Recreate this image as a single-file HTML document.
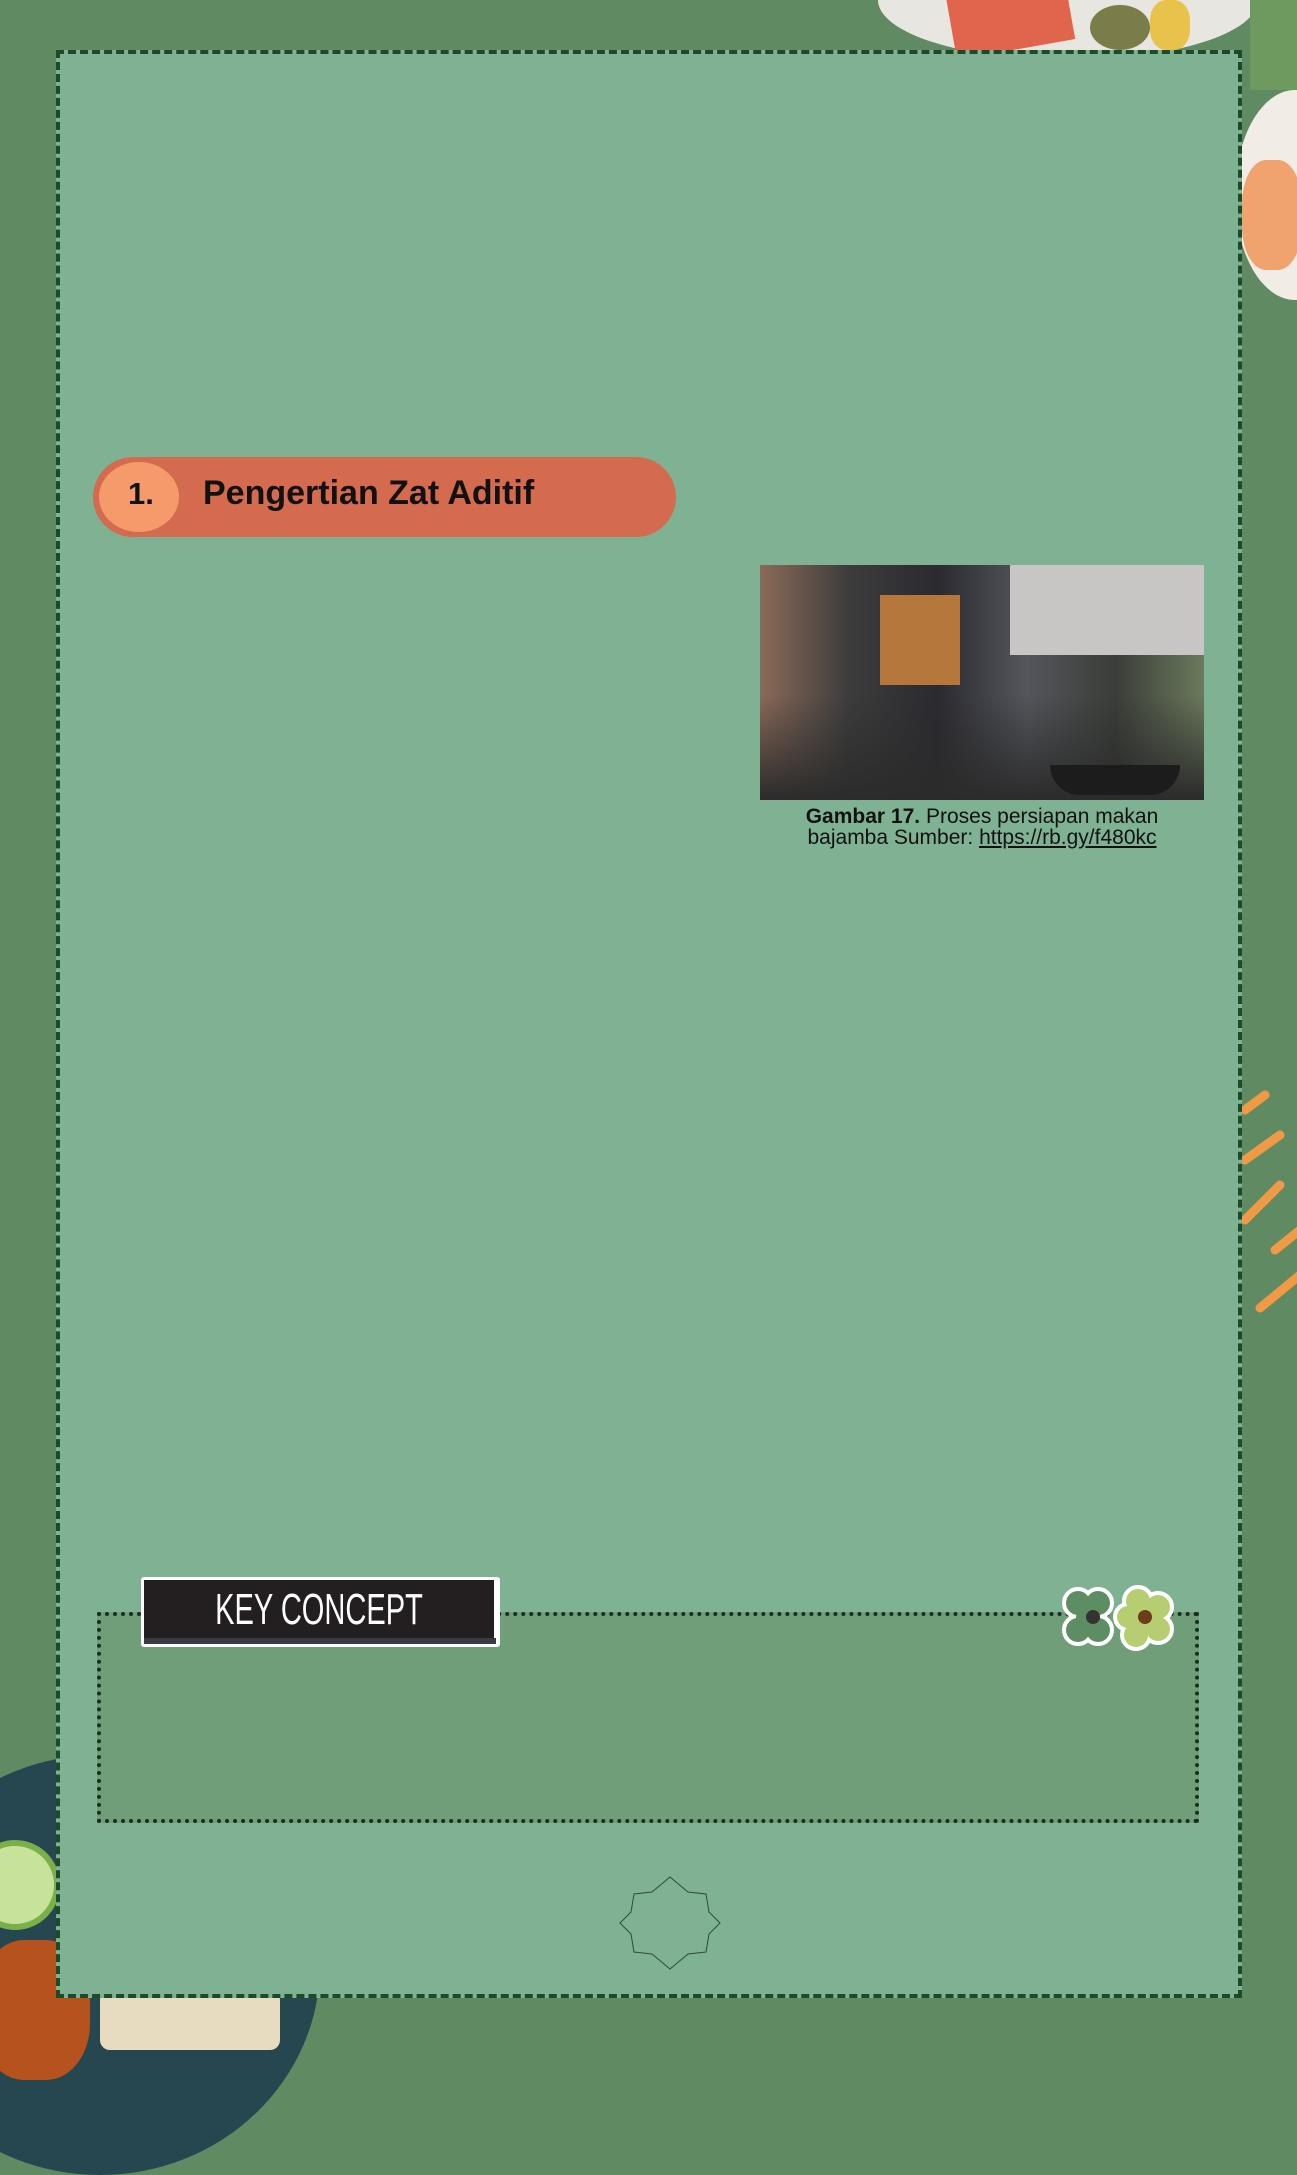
<!DOCTYPE html>
<html><head><meta charset="utf-8"><style>
*{margin:0;padding:0;box-sizing:border-box}
body{width:1297px;height:2047px;background:#5f8a62;position:relative;overflow:hidden;font-family:"Liberation Sans",sans-serif}
.a{position:absolute}
</style></head><body>
<!-- top right food plate -->
<div class="a" style="left:878px;top:-60px;width:380px;height:120px;border-radius:50%;background:#e8e6e0"></div>
<div class="a" style="left:950px;top:-20px;width:120px;height:70px;background:#e0654c;transform:rotate(-10deg)"></div>
<div class="a" style="left:1090px;top:5px;width:60px;height:45px;border-radius:50%;background:#7a7d4a"></div>
<div class="a" style="left:1150px;top:0px;width:40px;height:50px;border-radius:40%;background:#e8c24a"></div>
<div class="a" style="left:1235px;top:90px;width:120px;height:210px;border-radius:50%;background:#f1ede6"></div>
<div class="a" style="left:1242px;top:160px;width:60px;height:110px;border-radius:40%;background:#f0a36e"></div>
<div class="a" style="left:1250px;top:0;width:47px;height:90px;background:#6e9a60"></div>
<!-- bottom-left bowl -->
<div class="a" style="left:-120px;top:1755px;width:440px;height:420px;border-radius:50%;background:#264650"></div>
<div class="a" style="left:-30px;top:1840px;width:90px;height:90px;border-radius:50%;background:#c7e39a;border:6px solid #79b04a"></div>
<div class="a" style="left:-20px;top:1940px;width:110px;height:140px;border-radius:40%;background:#b6521e"></div>
<div class="a" style="left:100px;top:1990px;width:180px;height:60px;background:#e8dcc0;border-radius:10px"></div>
<!-- orange stripes -->
<svg class="a" style="left:1240px;top:1080px" width="57" height="240"><g stroke="#f09a45" stroke-width="9" stroke-linecap="round"><line x1="5" y1="30" x2="25" y2="15"/><line x1="5" y1="80" x2="40" y2="55"/><line x1="5" y1="140" x2="40" y2="105"/><line x1="35" y1="170" x2="60" y2="150"/><line x1="20" y1="228" x2="60" y2="195"/></g></svg>
<!-- main frame -->
<div class="a" style="left:56px;top:50px;width:1186px;height:1948px;background:#7fb293;border:4px dashed #1f4a2a"></div>
<!-- pill -->
<div class="a" style="left:93px;top:457px;width:583px;height:80px;border-radius:40px;background:#d46a4e"></div>
<div class="a" style="left:99px;top:462px;width:80px;height:70px;border-radius:50%;background:#f59a6a"></div>
<div class="a" style="left:128px;top:476px;font-size:31px;font-weight:bold;color:#111">1.</div>
<div class="a" style="left:203px;top:474px;font-size:34px;font-weight:bold;color:#111">Pengertian Zat Aditif</div>
<!-- photo -->
<div class="a" style="left:760px;top:565px;width:444px;height:235px;overflow:hidden;background:linear-gradient(90deg,#8b6a58 0%,#3d3c3c 20%,#2a2a30 40%,#54565c 60%,#3a3d38 80%,#6b7a5c 100%)">
<div class="a" style="left:250px;top:0;width:194px;height:90px;background:#c8c6c4"></div>
<div class="a" style="left:120px;top:30px;width:80px;height:90px;background:#b5783a"></div>
<div class="a" style="left:0;top:130px;width:444px;height:105px;background:linear-gradient(180deg,rgba(40,40,40,0) 0%,#2b2b2b 100%)"></div>
<div class="a" style="left:290px;top:200px;width:130px;height:30px;border-radius:0 0 60px 60px;background:#1c1c1c"></div>
</div>
<div class="a" style="left:740px;top:806px;width:484px;text-align:center;font-size:21px;line-height:21px;color:#111"><b>Gambar 17.</b> Proses persiapan makan<br>bajamba Sumber: <u>https://rb.gy/f480kc</u></div>
<!-- key concept box -->
<div class="a" style="left:97px;top:1612px;width:1102px;height:211px;background:#6f9e78;border:4px dotted #1c2c22"></div>
<div class="a" style="left:141px;top:1577px;width:359px;height:70px;background:#fff;border-radius:3px"></div>
<div class="a" style="left:144px;top:1580px;width:350px;height:60px;background:#231f20"></div>
<div class="a" style="left:144px;top:1638px;width:352px;height:6px;background:#3a3a44"></div>
<div class="a" style="left:144px;top:1580px;width:350px;height:60px;text-align:center;color:#fff;font-family:'Liberation Sans Narrow','Liberation Sans',sans-serif;font-size:44px;line-height:60px;transform:scaleX(0.66)">KEY CONCEPT</div>
<!-- flowers -->
<svg class="a" style="left:1058px;top:1585px" width="120" height="70">
<g stroke="#fff" stroke-width="6"><g fill="#5d8e63"><circle cx="20" cy="18" r="13"/><circle cx="40" cy="18" r="13"/><circle cx="20" cy="45" r="13"/><circle cx="40" cy="45" r="13"/></g>
<g fill="#b7cd72"><circle cx="80" cy="16" r="13"/><circle cx="100" cy="22" r="13"/><circle cx="100" cy="44" r="13"/><circle cx="78" cy="50" r="13"/><circle cx="70" cy="32" r="12"/></g></g>
<g fill="#5d8e63"><circle cx="20" cy="18" r="12"/><circle cx="40" cy="18" r="12"/><circle cx="20" cy="45" r="12"/><circle cx="40" cy="45" r="12"/><circle cx="30" cy="32" r="12"/></g>
<g fill="#b7cd72"><circle cx="80" cy="16" r="12"/><circle cx="100" cy="22" r="12"/><circle cx="100" cy="44" r="12"/><circle cx="78" cy="50" r="12"/><circle cx="70" cy="32" r="11"/><circle cx="88" cy="32" r="12"/></g>
<circle cx="35" cy="32" r="7" fill="#333"/><circle cx="87" cy="32" r="7" fill="#6b3d1a"/></svg>
<!-- star outline -->
<svg class="a" style="left:618px;top:1875px" width="106" height="96"><path d="M52,2 L70,17 L88,19 L91,37 L102,48 L91,59 L88,77 L70,79 L52,94 L34,79 L16,77 L13,59 L2,48 L13,37 L16,19 L34,17 Z" fill="none" stroke="#2f4a36" stroke-width="1"/></svg>
</body></html>
